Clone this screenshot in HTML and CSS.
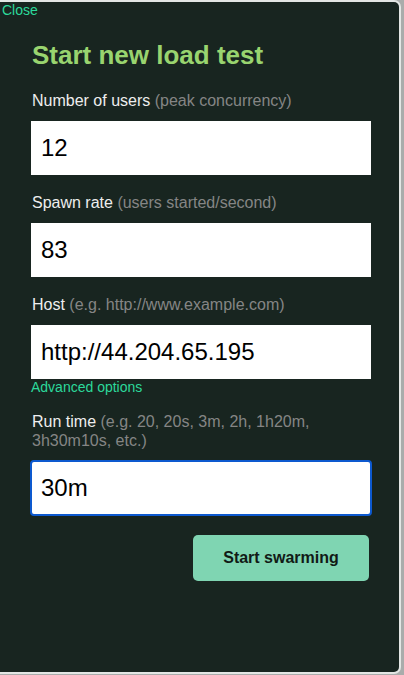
FILE: index.html
```html
<!DOCTYPE html>
<html lang="en">
<head>
<meta charset="utf-8">
<title>Start new load test</title>
<link rel="stylesheet" href="styles.css">
</head>
<body>
<div class="panel">
  <a class="close" href="#">Close</a>
  <form class="form">
    <h1 class="title">Start new load test</h1>
    <label class="label">Number of users <span class="hint">(peak concurrency)</span></label>
    <input class="field" type="text" value="12" readonly>
    <label class="label">Spawn rate <span class="hint">(users started/second)</span></label>
    <input class="field" type="text" value="83" readonly>
    <label class="label">Host <span class="hint">(e.g. http://www.example.com)</span></label>
    <input class="field field-tight" type="text" value="http://44.204.65.195" readonly>
    <a class="advanced" href="#">Advanced options</a>
    <label class="label label-wrap">Run time <span class="hint">(e.g. 20, 20s, 3m, 2h, 1h20m,</span> <span class="hint">3h30m10s, etc.)</span></label>
    <input class="field field-focus" type="text" value="30m" readonly>
    <div class="actions">
      <button class="submit" type="button">Start swarming</button>
    </div>
  </form>
</div>
</body>
</html>
```
FILE: styles.css
```css
html, body {
  margin: 0;
  padding: 0;
}
body {
  background: #a9acab;
  font-family: "Liberation Sans", Arial, sans-serif;
  width: 404px;
  height: 675px;
  overflow: hidden;
}
.panel {
  box-sizing: border-box;
  width: 401px;
  height: 674px;
  background: #182520;
  border: 2px solid #e3e6e4;
  border-left: 0;
  border-radius: 0 7px 7px 0;
}
.close {
  display: block;
  width: max-content;
  margin-left: 2px;
  font-size: 14px;
  line-height: 16px;
  color: #2cd99b;
  text-decoration: none;
}
.form {
  display: flex;
  flex-direction: column;
  width: 340px;
  padding: 0 31px;
}
.title {
  margin: 22px 0 22px 1px;
  font-size: 26px;
  line-height: 30px;
  font-weight: bold;
  color: #99d46f;
}
.label {
  display: block;
  margin: 0 0 11px 1px;
  font-size: 16px;
  line-height: 18px;
  color: #eeeeee;
}
.label-wrap {
  line-height: 19px;
  margin-top: -2px;
}
.hint {
  color: #858585;
}
.field {
  box-sizing: border-box;
  width: 340px;
  height: 54px;
  margin: 0 0 19px 0;
  padding: 0 10px;
  border: 0;
  background: #ffffff;
  font-family: "Liberation Sans", Arial, sans-serif;
  font-size: 24px;
  color: #000000;
  outline: none;
}
.field-tight {
  margin-bottom: 0;
}
.field-focus {
  outline: 2px solid #0d59cf;
  outline-offset: -1px;
  border-radius: 3px;
  margin-bottom: 20px;
}
.advanced {
  display: block;
  width: max-content;
  margin: 0 0 19px 0;
  font-size: 14px;
  line-height: 16px;
  color: #2cd99b;
  text-decoration: none;
}
.actions {
  display: flex;
  justify-content: flex-end;
  padding-right: 2px;
}
.submit {
  width: 176px;
  height: 46px;
  border: 0;
  border-radius: 5px;
  background: #7fd5b2;
  color: #111a16;
  font-family: "Liberation Sans", Arial, sans-serif;
  font-size: 16px;
  font-weight: bold;
  cursor: pointer;
}
```
